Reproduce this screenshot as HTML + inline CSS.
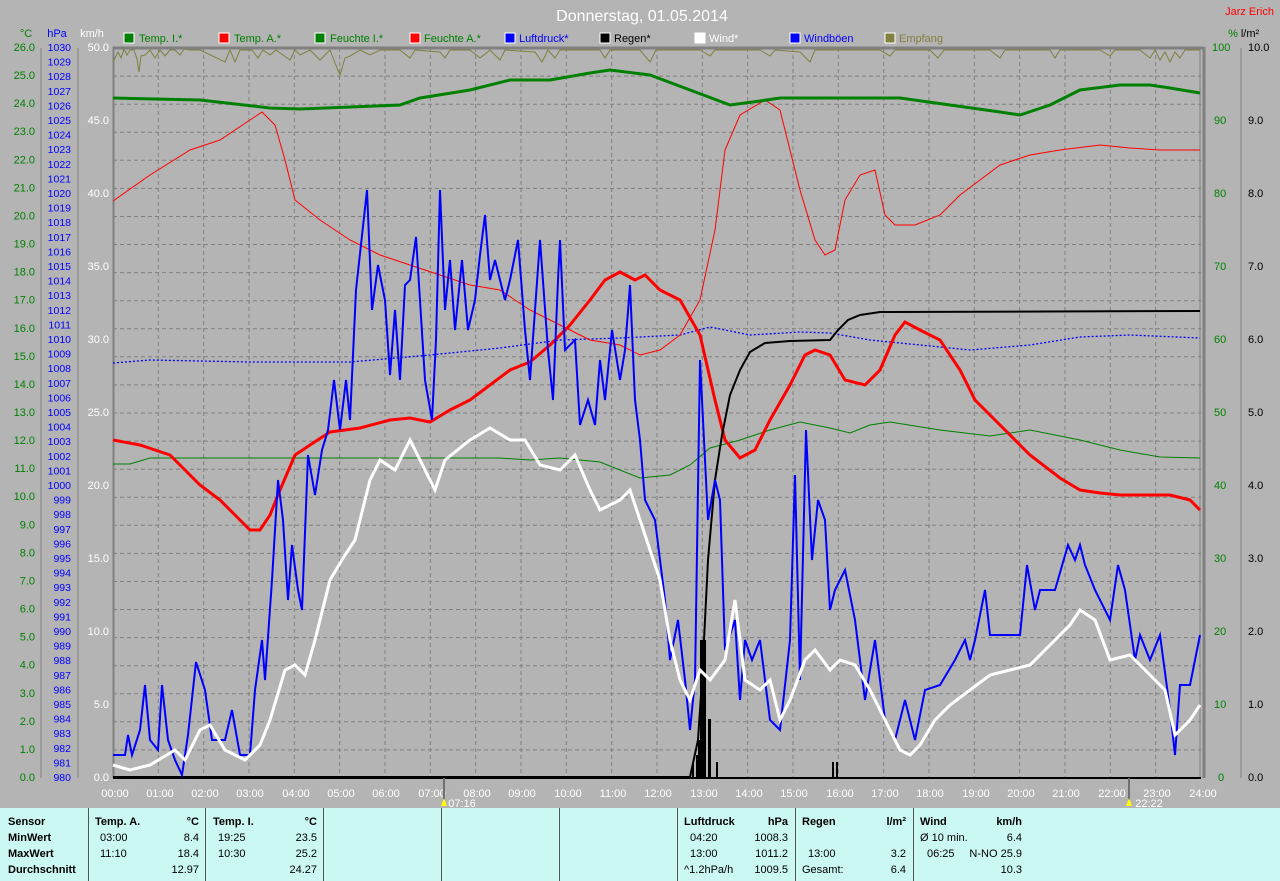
<!DOCTYPE html>
<html><head><meta charset="utf-8"><style>
body{margin:0;width:1280px;height:881px;overflow:hidden;background:#b4b4b4;font-family:"Liberation Sans",sans-serif;position:relative}
svg{position:absolute;left:0;top:0}
.tb{position:absolute;left:0;top:808px;width:1280px;height:73px;background:#ccf8f4}
.tb div{position:absolute;font-size:11px;color:#000;white-space:nowrap}
.b{font-weight:bold}
.sep{position:absolute;top:0;width:1px;height:73px;background:#555}
</style></head><body>
<svg width="1280" height="808" font-family="Liberation Sans, sans-serif" font-size="11">
<text x="642" y="21" fill="#fff" font-size="16" text-anchor="middle">Donnerstag, 01.05.2014</text>
<text x="1274" y="15" fill="#f00" font-size="11" text-anchor="end">Jarz Erich</text>
<g font-size="11">
<text x="26" y="37" fill="#008000" text-anchor="middle">°C</text>
<text x="57" y="37" fill="#0000ff" text-anchor="middle">hPa</text>
<text x="92" y="37" fill="#fff" text-anchor="middle">km/h</text>
<text x="1233" y="37" fill="#008000" text-anchor="middle">%</text>
<text x="1250" y="37" fill="#000" text-anchor="middle">l/m²</text>
</g>
<g font-size="11">
<rect x="124" y="33" width="10" height="10" fill="#008000" stroke="#fff"/><text x="139" y="42" fill="#008000">Temp. I.*</text>
<rect x="219" y="33" width="10" height="10" fill="#ff0000" stroke="#fff"/><text x="234" y="42" fill="#008000">Temp. A.*</text>
<rect x="315" y="33" width="10" height="10" fill="#008000" stroke="#fff"/><text x="330" y="42" fill="#008000">Feuchte I.*</text>
<rect x="410" y="33" width="10" height="10" fill="#ff0000" stroke="#fff"/><text x="424" y="42" fill="#008000">Feuchte A.*</text>
<rect x="505" y="33" width="10" height="10" fill="#0000ff" stroke="#fff"/><text x="519" y="42" fill="#0000ff">Luftdruck*</text>
<rect x="600" y="33" width="10" height="10" fill="#000" stroke="#fff"/><text x="614" y="42" fill="#000">Regen*</text>
<rect x="695" y="33" width="10" height="10" fill="#fff" stroke="#fff"/><text x="709" y="42" fill="#fff">Wind*</text>
<rect x="790" y="33" width="10" height="10" fill="#0000ff" stroke="#fff"/><text x="804" y="42" fill="#0000ff">Windböen</text>
<rect x="885" y="33" width="10" height="10" fill="#808040" stroke="#fff"/><text x="899" y="42" fill="#808040">Empfang</text>
</g>
<!-- axes lines -->
<g stroke="#808080" stroke-width="1">
<line x1="41" y1="48" x2="41" y2="778"/><line x1="78" y1="48" x2="78" y2="778"/><line x1="1241" y1="48" x2="1241" y2="778"/>
</g>
<!-- grid -->
<g stroke="#808080" stroke-dasharray="4,3" stroke-width="1">
<line x1="158.3" y1="48" x2="158.3" y2="778"/><line x1="203.7" y1="48" x2="203.7" y2="778"/><line x1="249" y1="48" x2="249" y2="778"/><line x1="294.3" y1="48" x2="294.3" y2="778"/><line x1="339.7" y1="48" x2="339.7" y2="778"/><line x1="385" y1="48" x2="385" y2="778"/><line x1="430.3" y1="48" x2="430.3" y2="778"/><line x1="475.7" y1="48" x2="475.7" y2="778"/><line x1="521" y1="48" x2="521" y2="778"/><line x1="566.3" y1="48" x2="566.3" y2="778"/><line x1="611.7" y1="48" x2="611.7" y2="778"/><line x1="657" y1="48" x2="657" y2="778"/><line x1="702.3" y1="48" x2="702.3" y2="778"/><line x1="747.7" y1="48" x2="747.7" y2="778"/><line x1="793" y1="48" x2="793" y2="778"/><line x1="838.3" y1="48" x2="838.3" y2="778"/><line x1="883.7" y1="48" x2="883.7" y2="778"/><line x1="929" y1="48" x2="929" y2="778"/><line x1="974.3" y1="48" x2="974.3" y2="778"/><line x1="1019.7" y1="48" x2="1019.7" y2="778"/><line x1="1065" y1="48" x2="1065" y2="778"/><line x1="1110.3" y1="48" x2="1110.3" y2="778"/><line x1="1155.7" y1="48" x2="1155.7" y2="778"/>
<line x1="113" x2="1201" y1="76.1" y2="76.1"/><line x1="113" x2="1201" y1="104.2" y2="104.2"/><line x1="113" x2="1201" y1="132.2" y2="132.2"/><line x1="113" x2="1201" y1="160.3" y2="160.3"/><line x1="113" x2="1201" y1="188.4" y2="188.4"/><line x1="113" x2="1201" y1="216.5" y2="216.5"/><line x1="113" x2="1201" y1="244.5" y2="244.5"/><line x1="113" x2="1201" y1="272.6" y2="272.6"/><line x1="113" x2="1201" y1="300.7" y2="300.7"/><line x1="113" x2="1201" y1="328.8" y2="328.8"/><line x1="113" x2="1201" y1="356.8" y2="356.8"/><line x1="113" x2="1201" y1="384.9" y2="384.9"/><line x1="113" x2="1201" y1="413" y2="413"/><line x1="113" x2="1201" y1="441.1" y2="441.1"/><line x1="113" x2="1201" y1="469.2" y2="469.2"/><line x1="113" x2="1201" y1="497.2" y2="497.2"/><line x1="113" x2="1201" y1="525.3" y2="525.3"/><line x1="113" x2="1201" y1="553.4" y2="553.4"/><line x1="113" x2="1201" y1="581.5" y2="581.5"/><line x1="113" x2="1201" y1="609.5" y2="609.5"/><line x1="113" x2="1201" y1="637.6" y2="637.6"/><line x1="113" x2="1201" y1="665.7" y2="665.7"/><line x1="113" x2="1201" y1="693.8" y2="693.8"/><line x1="113" x2="1201" y1="721.8" y2="721.8"/><line x1="113" x2="1201" y1="749.9" y2="749.9"/>
</g>
<line x1="113.5" y1="47" x2="113.5" y2="778" stroke="#808080" stroke-width="2"/>
<line x1="1200" y1="47" x2="1200" y2="778" stroke="#808080" stroke-width="1"/>
<line x1="1204" y1="47" x2="1204" y2="778" stroke="#808080" stroke-width="3"/>
<line x1="113" y1="48" x2="1204" y2="48" stroke="#808080" stroke-width="3"/>
<line x1="113" y1="778" x2="1201" y2="778" stroke="#000" stroke-width="2"/>
<!-- left °C -->
<g fill="#008000" text-anchor="end" dominant-baseline="central">
<text x="35" y="48">26.0</text><text x="35" y="76.1">25.0</text><text x="35" y="104.2">24.0</text><text x="35" y="132.2">23.0</text><text x="35" y="160.3">22.0</text><text x="35" y="188.4">21.0</text><text x="35" y="216.5">20.0</text><text x="35" y="244.5">19.0</text><text x="35" y="272.6">18.0</text><text x="35" y="300.7">17.0</text><text x="35" y="328.8">16.0</text><text x="35" y="356.8">15.0</text><text x="35" y="384.9">14.0</text><text x="35" y="413">13.0</text><text x="35" y="441.1">12.0</text><text x="35" y="469.2">11.0</text><text x="35" y="497.2">10.0</text><text x="35" y="525.3">9.0</text><text x="35" y="553.4">8.0</text><text x="35" y="581.5">7.0</text><text x="35" y="609.5">6.0</text><text x="35" y="637.6">5.0</text><text x="35" y="665.7">4.0</text><text x="35" y="693.8">3.0</text><text x="35" y="721.8">2.0</text><text x="35" y="749.9">1.0</text><text x="35" y="778">0.0</text>
</g>
<g fill="#0000ff" text-anchor="end" dominant-baseline="central" font-size="10.5">
<text x="71" y="48">1030</text><text x="71" y="62.6">1029</text><text x="71" y="77.2">1028</text><text x="71" y="91.8">1027</text><text x="71" y="106.4">1026</text><text x="71" y="121">1025</text><text x="71" y="135.6">1024</text><text x="71" y="150.2">1023</text><text x="71" y="164.8">1022</text><text x="71" y="179.4">1021</text><text x="71" y="194">1020</text><text x="71" y="208.6">1019</text><text x="71" y="223.2">1018</text><text x="71" y="237.8">1017</text><text x="71" y="252.4">1016</text><text x="71" y="267">1015</text><text x="71" y="281.6">1014</text><text x="71" y="296.2">1013</text><text x="71" y="310.8">1012</text><text x="71" y="325.4">1011</text><text x="71" y="340">1010</text><text x="71" y="354.6">1009</text><text x="71" y="369.2">1008</text><text x="71" y="383.8">1007</text><text x="71" y="398.4">1006</text><text x="71" y="413">1005</text><text x="71" y="427.6">1004</text><text x="71" y="442.2">1003</text><text x="71" y="456.8">1002</text><text x="71" y="471.4">1001</text><text x="71" y="486">1000</text><text x="71" y="500.6">999</text><text x="71" y="515.2">998</text><text x="71" y="529.8">997</text><text x="71" y="544.4">996</text><text x="71" y="559">995</text><text x="71" y="573.6">994</text><text x="71" y="588.2">993</text><text x="71" y="602.8">992</text><text x="71" y="617.4">991</text><text x="71" y="632">990</text><text x="71" y="646.6">989</text><text x="71" y="661.2">988</text><text x="71" y="675.8">987</text><text x="71" y="690.4">986</text><text x="71" y="705">985</text><text x="71" y="719.6">984</text><text x="71" y="734.2">983</text><text x="71" y="748.8">982</text><text x="71" y="763.4">981</text><text x="71" y="778">980</text>
</g>
<g fill="#fff" text-anchor="end" dominant-baseline="central">
<text x="109" y="48">50.0</text><text x="109" y="121">45.0</text><text x="109" y="194">40.0</text><text x="109" y="267">35.0</text><text x="109" y="340">30.0</text><text x="109" y="413">25.0</text><text x="109" y="486">20.0</text><text x="109" y="559">15.0</text><text x="109" y="632">10.0</text><text x="109" y="705">5.0</text><text x="109" y="778">0.0</text>
</g>
<g fill="#008000" text-anchor="start" dominant-baseline="central">
<text x="1212" y="48">100</text><text x="1214" y="121">90</text><text x="1214" y="194">80</text><text x="1214" y="267">70</text><text x="1214" y="340">60</text><text x="1214" y="413">50</text><text x="1214" y="486">40</text><text x="1214" y="559">30</text><text x="1214" y="632">20</text><text x="1214" y="705">10</text><text x="1218" y="778">0</text>
</g>
<g fill="#000" text-anchor="start" dominant-baseline="central">
<text x="1248" y="48">10.0</text><text x="1248" y="121">9.0</text><text x="1248" y="194">8.0</text><text x="1248" y="267">7.0</text><text x="1248" y="340">6.0</text><text x="1248" y="413">5.0</text><text x="1248" y="486">4.0</text><text x="1248" y="559">3.0</text><text x="1248" y="632">2.0</text><text x="1248" y="705">1.0</text><text x="1248" y="778">0.0</text>
</g>
<g fill="#fff" text-anchor="middle" font-size="11">
<text x="115" y="797">00:00</text><text x="160" y="797">01:00</text><text x="205" y="797">02:00</text><text x="250" y="797">03:00</text><text x="296" y="797">04:00</text><text x="341" y="797">05:00</text><text x="386" y="797">06:00</text><text x="432" y="797">07:00</text><text x="477" y="797">08:00</text><text x="522" y="797">09:00</text><text x="568" y="797">10:00</text><text x="613" y="797">11:00</text><text x="658" y="797">12:00</text><text x="704" y="797">13:00</text><text x="749" y="797">14:00</text><text x="794" y="797">15:00</text><text x="840" y="797">16:00</text><text x="885" y="797">17:00</text><text x="930" y="797">18:00</text><text x="976" y="797">19:00</text><text x="1021" y="797">20:00</text><text x="1066" y="797">21:00</text><text x="1112" y="797">22:00</text><text x="1157" y="797">23:00</text><text x="1203" y="797">24:00</text>
<text x="462" y="807">07:16</text><text x="1149" y="807">22:22</text>
</g>
<line x1="444" y1="778" x2="444" y2="800" stroke="#707070" stroke-width="2"/>
<line x1="1129" y1="778" x2="1129" y2="800" stroke="#707070" stroke-width="2"/>
<polygon points="441,806 444,798 447,806" fill="#ff0"/><polygon points="1126,806 1129,798 1132,806" fill="#ff0"/>
<!-- Empfang -->
<polyline fill="none" stroke="#808040" stroke-width="1" points="113,62 118,52 121,58 124,49 127,55 130,50 134,50 137,59 139,72 141,56 145,55 150,50 155,58 160,50 165,56 170,50 175,50 180,55 184,49 190,50 200,50 225,62 230,50 235,62 240,50 252,50 258,58 263,50 270,55 276,50 290,60 295,50 300,55 310,50 320,60 330,50 335,63 340,75 345,58 350,56 360,50 370,55 380,50 400,50 410,58 415,50 440,52 445,58 450,50 470,50 480,58 490,50 500,60 505,50 535,52 542,62 548,50 555,58 560,50 600,50 605,58 610,50 640,50 650,62 656,50 700,50 710,56 715,50 760,50 770,56 775,50 800,52 810,62 815,50 880,50 890,56 895,50 930,50 938,58 944,50 990,50 1000,58 1005,50 1050,50 1055,58 1060,50 1100,50 1110,56 1115,50 1140,50 1150,58 1155,50 1160,60 1165,52 1170,62 1175,52 1180,58 1185,50 1200,50"/>
<!-- Feuchte I thin green -->
<polyline fill="none" stroke="#008000" stroke-width="1" points="113,464 130,464 150,458 500,458 530,460 560,458 600,462 640,478 670,475 690,465 710,448 740,440 770,430 800,422 830,428 850,433 870,425 890,422 940,430 990,436 1030,430 1080,440 1120,450 1160,457 1200,458"/>
<!-- Luftdruck dotted -->
<polyline fill="none" stroke="#0000ff" stroke-width="1.3" stroke-dasharray="2,2" points="113,363 150,360 250,362 350,362 430,355 500,348 560,340 620,338 680,335 710,327 750,335 800,332 830,333 870,340 920,345 970,350 1030,345 1080,337 1130,335 1200,338"/>
<!-- Feuchte A thin red -->
<polyline fill="none" stroke="#ff0000" stroke-width="1" points="113,201 150,175 190,150 220,140 250,120 262,112 275,125 285,160 295,200 320,220 350,240 380,255 410,265 440,275 470,285 500,290 530,310 560,325 590,340 620,345 640,355 660,350 680,335 700,300 715,230 725,150 740,115 765,100 780,110 790,150 800,190 815,240 825,255 835,250 845,200 860,175 875,170 885,215 895,225 915,225 940,215 960,195 980,180 1000,165 1030,155 1060,150 1100,145 1130,148 1160,150 1200,150"/>
<!-- Temp I thick green -->
<polyline fill="none" stroke="#008000" stroke-width="3" points="113,98 200,100 270,108 300,109 400,105 420,98 470,90 510,80 550,80 590,73 610,70 650,75 690,90 730,105 760,101 780,98 900,98 950,105 1000,112 1020,115 1050,105 1080,90 1120,85 1150,85 1170,88 1200,93"/>
<!-- Temp A thick red -->
<polyline fill="none" stroke="#ff0000" stroke-width="3" points="113,440 140,445 170,455 200,485 220,500 235,515 250,530 260,530 270,515 280,490 295,455 310,445 330,432 360,428 390,420 410,418 430,422 450,410 470,400 490,385 510,370 530,362 550,345 570,325 590,300 605,280 620,272 635,280 645,275 660,290 680,300 700,335 715,400 725,440 740,458 755,450 770,420 790,385 805,355 815,350 830,355 845,380 865,385 880,370 895,335 905,322 920,330 940,340 960,370 975,400 1000,425 1030,455 1060,478 1080,490 1100,493 1120,495 1170,495 1190,500 1200,510"/>
<!-- Regen cumulative -->
<polyline fill="none" stroke="#000" stroke-width="2" points="113,777 690,777 698,740 702,680 708,560 715,480 722,435 730,395 740,370 750,352 765,343 790,341 830,340 838,330 848,320 860,315 880,312 1200,311"/>
<g fill="#000"><rect x="692" y="763" width="2" height="15"/><rect x="696" y="755" width="2" height="23"/><rect x="698" y="740" width="2" height="38"/><rect x="700" y="640" width="6" height="138"/><rect x="708" y="719" width="3" height="59"/><rect x="716" y="762" width="2" height="16"/><rect x="832" y="762" width="2" height="16"/><rect x="836" y="762" width="2" height="16"/></g>
<!-- Windböen -->
<polyline fill="none" stroke="#0000ff" stroke-width="2" points="113,755 125,755 128,735 132,755 140,730 145,685 150,740 158,750 162,685 168,740 175,760 182,775 188,735 196,662 205,690 212,740 225,740 232,710 240,755 250,755 255,690 262,640 265,680 272,580 278,480 283,520 288,600 292,545 298,590 302,610 308,455 315,495 322,450 328,430 334,380 340,430 346,380 350,420 356,290 367,190 372,310 378,265 385,300 390,375 395,310 400,380 405,285 410,280 416,237 425,380 432,420 436,340 440,190 445,310 450,260 455,330 462,260 468,330 475,300 480,255 485,215 490,280 495,260 505,300 510,280 518,240 525,330 530,380 540,240 548,350 553,400 558,280 560,240 565,350 575,340 580,425 588,400 595,425 600,360 605,400 612,330 620,380 625,350 630,285 635,400 640,440 645,500 655,520 665,600 670,660 678,620 685,680 690,730 695,680 700,360 708,520 715,480 720,500 725,650 735,620 740,700 745,640 752,660 760,640 770,720 780,730 790,640 795,475 800,680 806,430 812,560 818,500 825,520 830,610 835,590 845,570 855,620 865,700 875,640 885,720 895,740 905,700 915,740 925,690 940,685 955,660 965,640 970,660 975,640 985,590 990,635 1020,635 1027,565 1035,610 1040,590 1055,590 1068,545 1075,560 1080,545 1085,565 1095,590 1110,620 1118,565 1125,590 1135,660 1140,635 1150,660 1160,635 1170,710 1175,755 1180,685 1190,685 1200,635"/>
<!-- Wind avg white -->
<polyline fill="none" stroke="#fff" stroke-width="3" points="113,765 130,770 150,765 175,750 185,760 200,730 210,725 225,750 245,760 260,745 270,720 285,670 295,665 305,675 315,640 330,580 345,555 355,540 370,480 380,460 395,470 410,440 420,460 435,490 445,460 470,440 490,428 510,440 525,440 540,465 560,470 575,455 590,490 600,510 620,500 630,490 640,520 660,580 670,640 680,680 690,700 700,670 710,680 725,660 735,600 745,680 760,690 770,680 780,720 790,700 805,660 815,650 830,670 840,660 855,665 870,690 885,720 900,750 910,755 920,745 935,720 950,705 970,690 990,675 1010,670 1030,665 1050,645 1070,625 1080,610 1095,620 1110,660 1130,655 1150,675 1165,690 1175,735 1190,720 1200,705"/>
</svg>
<div class="tb">
<div class="sep" style="left:88px"></div><div class="sep" style="left:205px"></div><div class="sep" style="left:323px"></div><div class="sep" style="left:441px"></div><div class="sep" style="left:559px"></div><div class="sep" style="left:677px"></div><div class="sep" style="left:795px"></div><div class="sep" style="left:913px"></div>
<div class="b" style="left:8px;top:8px">Sensor</div><div class="b" style="left:8px;top:24px">MinWert</div><div class="b" style="left:8px;top:40px">MaxWert</div><div class="b" style="left:8px;top:56px">Durchschnitt</div>
<div class="b" style="left:95px;top:8px">Temp. A.</div><div class="b" style="right:1081px;top:8px">°C</div>
<div style="left:100px;top:24px">03:00</div><div style="right:1081px;top:24px">8.4</div>
<div style="left:100px;top:40px">11:10</div><div style="right:1081px;top:40px">18.4</div>
<div style="right:1081px;top:56px">12.97</div>
<div class="b" style="left:213px;top:8px">Temp. I.</div><div class="b" style="right:963px;top:8px">°C</div>
<div style="left:218px;top:24px">19:25</div><div style="right:963px;top:24px">23.5</div>
<div style="left:218px;top:40px">10:30</div><div style="right:963px;top:40px">25.2</div>
<div style="right:963px;top:56px">24.27</div>
<div class="b" style="left:684px;top:8px">Luftdruck</div><div class="b" style="right:492px;top:8px">hPa</div>
<div style="left:690px;top:24px">04:20</div><div style="right:492px;top:24px">1008.3</div>
<div style="left:690px;top:40px">13:00</div><div style="right:492px;top:40px">1011.2</div>
<div style="left:684px;top:56px">^1.2hPa/h</div><div style="right:492px;top:56px">1009.5</div>
<div class="b" style="left:802px;top:8px">Regen</div><div class="b" style="right:374px;top:8px">l/m²</div>
<div style="left:808px;top:40px">13:00</div><div style="right:374px;top:40px">3.2</div>
<div style="left:802px;top:56px">Gesamt:</div><div style="right:374px;top:56px">6.4</div>
<div class="b" style="left:920px;top:8px">Wind</div><div class="b" style="right:258px;top:8px">km/h</div>
<div style="left:920px;top:24px">Ø 10 min.</div><div style="right:258px;top:24px">6.4</div>
<div style="left:927px;top:40px">06:25</div><div style="right:258px;top:40px">N-NO 25.9</div>
<div style="right:258px;top:56px">10.3</div>
</div>
</body></html>
